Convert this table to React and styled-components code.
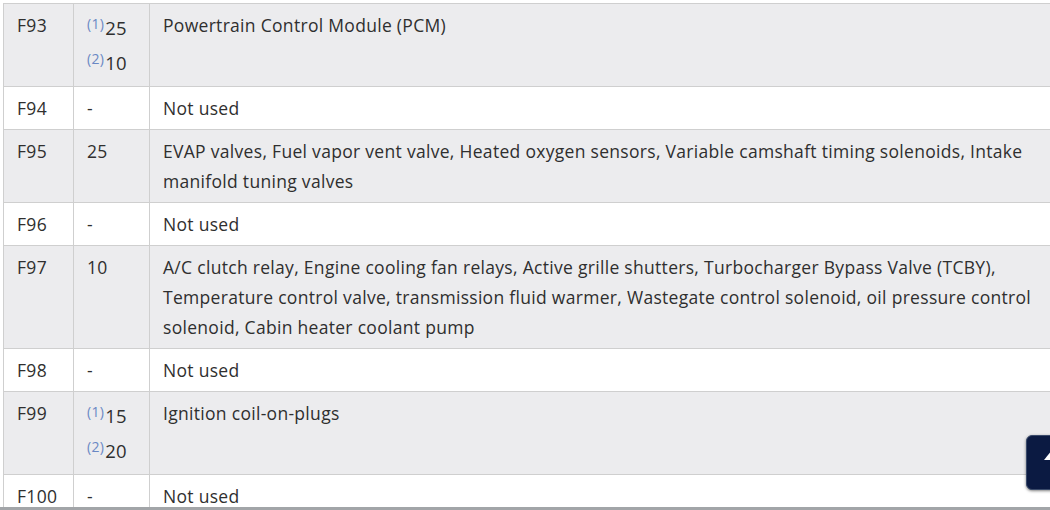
import styled, { createGlobalStyle } from 'styled-components';

const GlobalStyle = createGlobalStyle`
    html, body {
        margin: 0;
        padding: 0;
        background: #fff;
        overflow: hidden;
    }
    body {
        padding: 3px 0 0 3px;
        font-family: "Open Sans", "Noto Sans", Arial, sans-serif;
    }
`;

const rows = [
    { id: 'F93', values: [{ note: 1, amp: '25' }, { note: 2, amp: '10' }], text: 'Powertrain Control Module (PCM)' },
    { id: 'F94', values: [{ amp: '-' }], text: 'Not used' },
    { id: 'F95', values: [{ amp: '25' }], text: 'EVAP valves, Fuel vapor vent valve, Heated oxygen sensors, Variable camshaft timing solenoids, Intake manifold tuning valves' },
    { id: 'F96', values: [{ amp: '-' }], text: 'Not used' },
    { id: 'F97', values: [{ amp: '10' }], text: 'A/C clutch relay, Engine cooling fan relays, Active grille shutters, Turbocharger Bypass Valve (TCBY), Temperature control valve, transmission fluid warmer, Wastegate control solenoid, oil pressure control solenoid, Cabin heater coolant pump' },
    { id: 'F98', values: [{ amp: '-' }], text: 'Not used' },
    { id: 'F99', values: [{ note: 1, amp: '15' }, { note: 2, amp: '20' }], text: 'Ignition coil-on-plugs' },
    { id: 'F100', values: [{ amp: '-' }], text: 'Not used' },
];

export default function App() {
    return (
        <>
            <GlobalStyle />
            <FuseTable>
                <colgroup>
                    <col style={{ width: 70 }} />
                    <col style={{ width: 76 }} />
                    <col />
                </colgroup>
                <tbody>
                    {rows.map((row, i) => (
                        <Row key={row.id} $shaded={i % 2 === 0}>
                            <Cell>{row.id}</Cell>
                            <Cell>
                                {row.values.map((v, j) => (
                                    <ValueLine key={j} $raised={!!v.note}>
                                        {v.note && <Note>({v.note})</Note>}
                                        {v.amp}
                                    </ValueLine>
                                ))}
                            </Cell>
                            <Cell>{row.text}</Cell>
                        </Row>
                    ))}
                </tbody>
            </FuseTable>
            <ScrollTop aria-label="Back to top">
                <Arrow />
            </ScrollTop>
            <BottomEdge />
        </>
    );
}

const FuseTable = styled.table`
    width: 1052px;
    border-collapse: collapse;
    table-layout: fixed;
    font-size: 17.5px;
    letter-spacing: 0.3px;
    color: #2f2f2f;
`;

const Row = styled.tr`
    background: ${(p) => (p.$shaded ? '#ececee' : '#fff')};
`;

const Cell = styled.td`
    border: 1px solid #cfcfcf;
    padding: 6px 13px;
    line-height: 30px;
    vertical-align: top;
    text-align: left;
`;

const ValueLine = styled.div`
    padding: ${(p) => (p.$raised ? '3px 0 2px' : '0')};
    font-size: ${(p) => (p.$raised ? '18.5px' : 'inherit')};
`;

const Note = styled.span`
    font-size: 14px;
    color: #6a88c4;
    vertical-align: 6px;
    line-height: 1;
    margin-right: 1px;
`;

const ScrollTop = styled.button`
    position: fixed;
    left: 1026px;
    top: 435px;
    width: 50px;
    height: 55px;
    padding: 0;
    border: 1px solid #3a4a6a;
    border-radius: 6px;
    background: #0b1a42;
    box-shadow: 0 1px 3px rgba(0, 0, 0, 0.5);
    cursor: pointer;
`;

const Arrow = styled.span`
    position: absolute;
    left: 17px;
    top: 14px;
    width: 0;
    height: 0;
    border-left: 8px solid transparent;
    border-right: 8px solid transparent;
    border-bottom: 10px solid #fff;
`;

const BottomEdge = styled.div`
    position: fixed;
    left: 0;
    right: 0;
    bottom: 0;
    height: 3px;
    background: #a2a5a8;
`;
